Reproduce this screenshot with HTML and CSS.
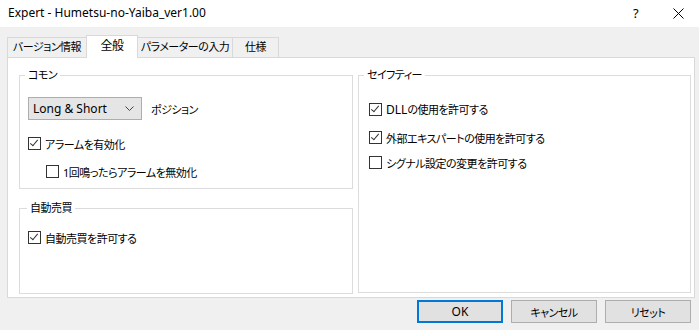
FILE: index.html
```html
<!DOCTYPE html>
<html lang="ja">
<head>
  <meta charset="UTF-8" />
  <title>Expert - Humetsu-no-Yaiba_ver1.00</title>
  <link rel="stylesheet" href="styles.css">
</head>
<body>

  <div class="titlebar">
    <span class="title">Expert - Humetsu-no-Yaiba_ver1.00</span>
    <span class="help">?</span>
    <span class="close">
      <svg width="11" height="11" viewBox="0 0 11 11"><path d="M0.5 0.5 L10.5 10.5 M10.5 0.5 L0.5 10.5" stroke="#000" stroke-width="1" fill="none"/></svg>
    </span>
  </div>

  <div class="tabs">
    <div class="tab tab-version">バージョン情報</div>
    <div class="tab tab-general active">全般</div>
    <div class="tab tab-params">パラメーターの入力</div>
    <div class="tab tab-spec">仕様</div>
  </div>

  <div class="panel">
    <div class="col-left">
      <!-- コモン -->
      <div class="group group-common">
        <span class="legend">コモン</span>
        <div class="row-select">
          <div class="select">
            <span class="latin">Long &amp; Short</span>
            <svg width="9" height="5" viewBox="0 0 9 5"><path d="M0.5 0.5 L4.5 4.5 L8.5 0.5" stroke="#444" stroke-width="1" fill="none"/></svg>
          </div>
          <span>ポジション</span>
        </div>
        <label class="check first"><span class="box on"></span>アラームを有効化</label>
        <label class="check sub"><span class="box"></span>1回鳴ったらアラームを無効化</label>
      </div>

      <!-- 自動売買 -->
      <div class="group group-auto">
        <span class="legend">自動売買</span>
        <label class="check first"><span class="box on"></span>自動売買を許可する</label>
      </div>
    </div>

    <!-- セイフティー -->
    <div class="group group-safety">
      <span class="legend">セイフティー</span>
      <label class="check first"><span class="box on"></span><span><span class="latin">DLL</span>の使用を許可する</span></label>
      <label class="check second"><span class="box on"></span>外部エキスパートの使用を許可する</label>
      <label class="check third"><span class="box"></span>シグナル設定の変更を許可する</label>
    </div>
  </div>

  <div class="buttons">
    <button class="default latin">OK</button>
    <button>キャンセル</button>
    <button>リセット</button>
  </div>

</body>
</html>
```

FILE: styles.css
```css
body {
  margin: 0;
  width: 699px;
  height: 330px;
  background-color: #f0f0f0;
  font-family: "Noto Sans", "Noto Sans CJK JP", sans-serif;
  font-feature-settings: "palt";
  font-size: 11px;
  letter-spacing: -0.5px;
  color: #000;
  overflow: hidden;
}
.latin {
  font-size: 12px;
  letter-spacing: 0;
}

/* Barra de titulo */
.titlebar {
  height: 27px;
  background-color: #fff;
  display: flex;
  align-items: center;
  padding-left: 8px;
  font-size: 12px;
  letter-spacing: 0;
}
.title {
  flex: 1;
  padding-bottom: 2px;
}
.help {
  width: 40px;
  font-size: 13px;
  padding-bottom: 2px;
}
.close {
  width: 26px;
  display: flex;
  padding-bottom: 1px;
}

/* Pestanas */
.tabs {
  display: flex;
  align-items: flex-end;
  margin: 8px 0 0 7px;
  height: 22px;
  position: relative;
  z-index: 1;
}
.tab {
  height: 20px;
  box-sizing: border-box;
  border: 1px solid #d9d9d9;
  border-bottom: none;
  line-height: 18px;
  text-align: center;
  margin-right: -1px;
  background-color: #f0f0f0;
}
.tab-version { width: 80px; }
.tab-general { width: 52px; }
.tab-params { width: 96px; }
.tab-spec { width: 47px; }
.tab.active {
  height: 23px;
  margin-bottom: -1px;
  background-color: #fff;
  line-height: 19px;
  font-size: 12px;
  position: relative;
  z-index: 2;
}

.panel {
  margin-left: 7px;
  width: 688px;
  height: 241px;
  box-sizing: border-box;
  background-color: #fff;
  border: 1px solid #d9d9d9;
  padding: 17px 3px 4px 11px;
  display: grid;
  grid-template-columns: 334px 333px;
  column-gap: 5px;
}
.col-left {
  display: flex;
  flex-direction: column;
  gap: 19px;
}

/* Grupos */
.group {
  position: relative;
  border: 1px solid #dcdcdc;
  box-sizing: border-box;
  padding-left: 8px;
}
.legend {
  position: absolute;
  top: -9px;
  left: 5px;
  padding: 0 3px;
  line-height: 16px;
  background-color: #fff;
}
.group-common {
  height: 114px;
  padding-top: 21px;
}
.group-auto {
  height: 86px;
  padding-top: 22px;
}
.group-auto .legend {
  left: 7px;
}
.group-safety {
  height: 218px;
  padding-top: 27px;
  padding-left: 10px;
}

/* Desplegable */
.row-select {
  display: flex;
  align-items: center;
  gap: 9px;
}
.select {
  width: 114px;
  height: 23px;
  box-sizing: border-box;
  border: 1px solid #adadad;
  background-color: #e5e5e5;
  display: flex;
  align-items: center;
  justify-content: space-between;
  padding: 0 7px 0 4px;
}

/* Casillas */
.check {
  display: flex;
  align-items: center;
  height: 13px;
  gap: 4px;
  white-space: nowrap;
}
.group-common .check.first {
  margin-top: 17px;
}
.check.sub {
  margin-top: 15px;
  margin-left: 18px;
}
.group-safety .check.second {
  margin-top: 15px;
}
.group-safety .check.third {
  margin-top: 12px;
}
.box {
  width: 13px;
  height: 13px;
  box-sizing: border-box;
  border: 1px solid #333;
  background-color: #fff;
  position: relative;
  flex: none;
}
.box.on::after {
  content: "";
  position: absolute;
  left: 3px;
  top: 0px;
  width: 3px;
  height: 7px;
  border-right: 1px solid #333;
  border-bottom: 1px solid #333;
  transform: rotate(40deg);
}

/* Botones */
.buttons {
  display: flex;
  justify-content: flex-end;
  gap: 8px;
  padding: 2px 8px 0 0;
}
button {
  width: 86px;
  height: 23px;
  box-sizing: border-box;
  border: 1px solid #adadad;
  background-color: #e1e1e1;
  font-family: inherit;
  font-feature-settings: "palt";
  font-size: 11px;
  letter-spacing: -0.5px;
  color: #000;
  padding: 0;
}
button.default {
  border: 2px solid #0078d7;
  font-size: 12px;
  letter-spacing: 0;
}
```
